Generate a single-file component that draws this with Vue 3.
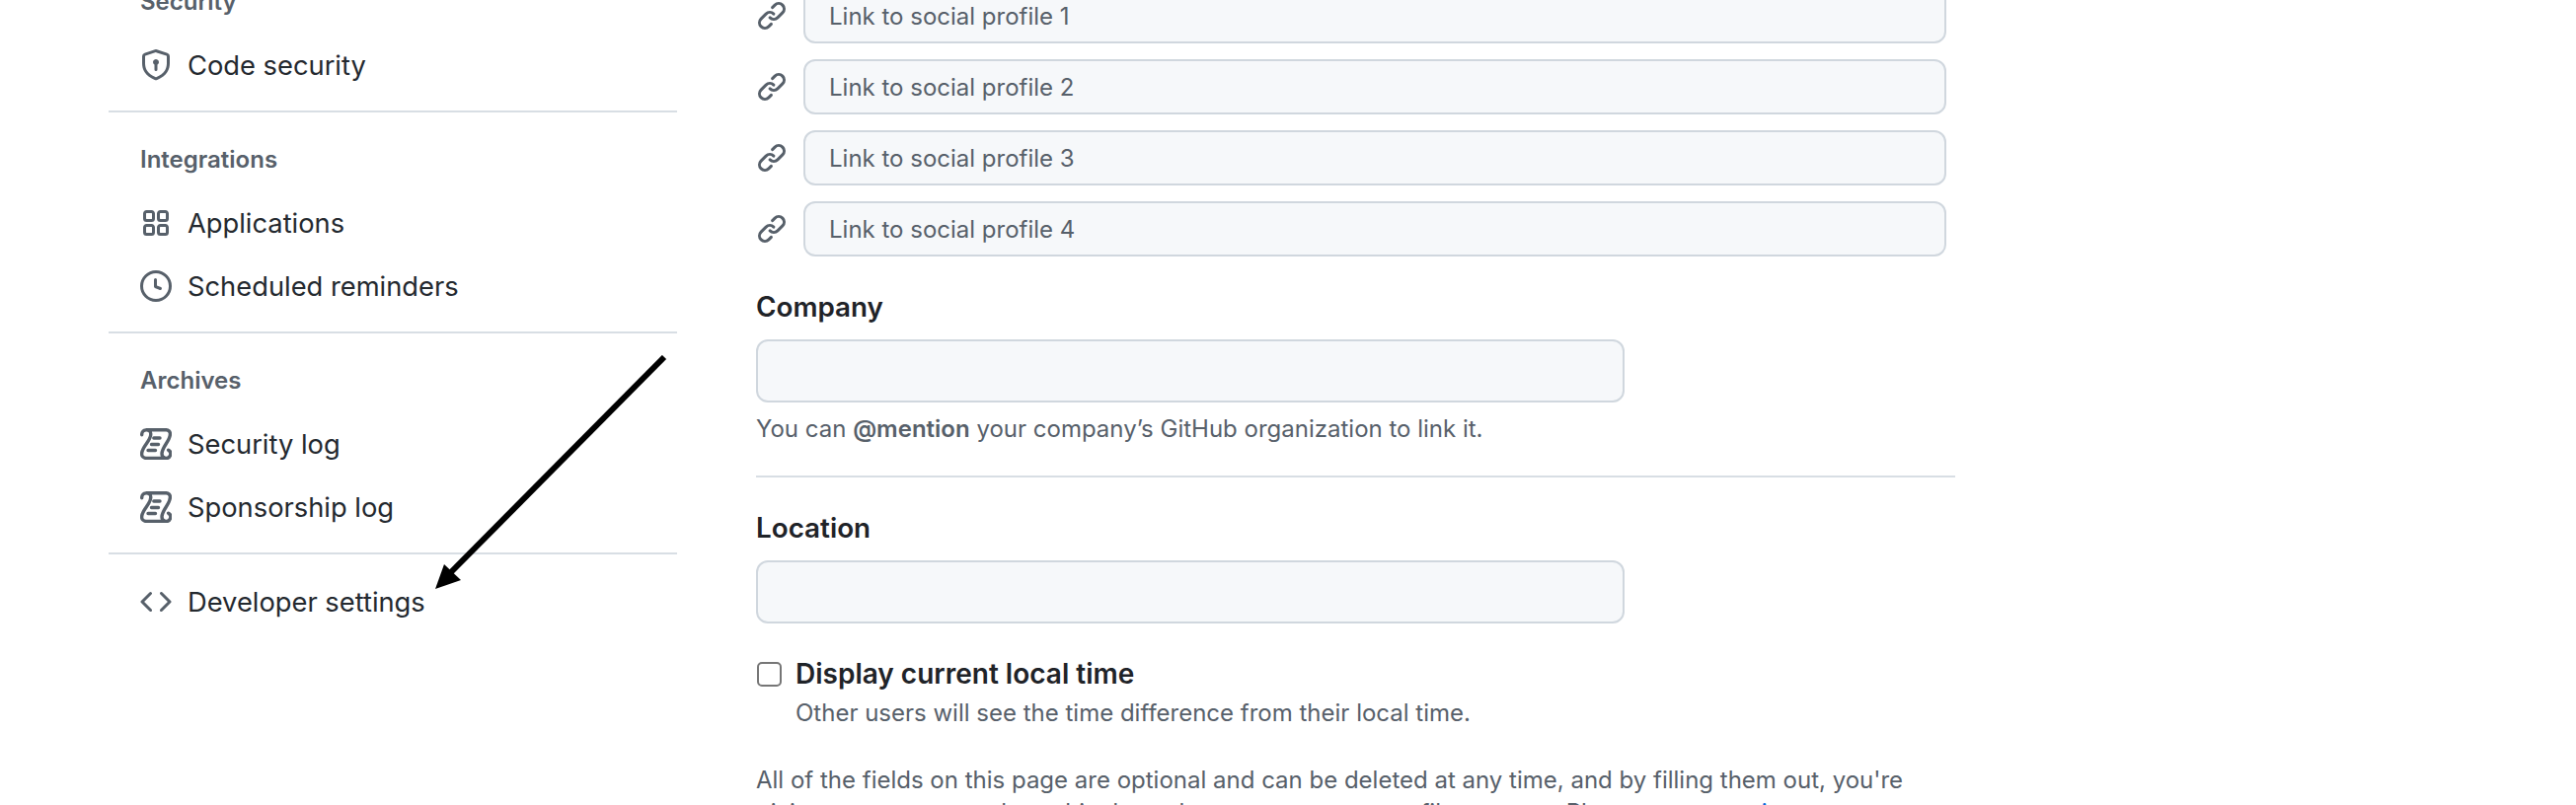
<script setup>
const links = [1, 2, 3, 4]
</script>

<template>
  <div class="page">
    <div class="layout">
      <nav class="side">
        <div class="head">Security</div>
        <a class="item">
          <svg class="ic" viewBox="0 0 16 16"><path d="M7.467.133a1.748 1.748 0 0 1 1.066 0l5.25 1.68A1.75 1.75 0 0 1 15 3.48V7c0 1.566-.32 3.182-1.303 4.682-.983 1.498-2.585 2.813-5.032 3.855a1.697 1.697 0 0 1-1.33 0c-2.447-1.042-4.049-2.357-5.032-3.855C1.32 10.182 1 8.566 1 7V3.48a1.75 1.75 0 0 1 1.217-1.667Zm.61 1.429a.25.25 0 0 0-.153 0l-5.25 1.68a.25.25 0 0 0-.174.238V7c0 1.358.275 2.666 1.057 3.86.784 1.194 2.121 2.34 4.366 3.297a.196.196 0 0 0 .154 0c2.245-.956 3.582-2.104 4.366-3.298C13.225 9.666 13.5 8.36 13.5 7V3.48a.251.251 0 0 0-.174-.237l-5.25-1.68ZM9.5 6.5c0 .536-.286 1.032-.75 1.3v2.45a.75.75 0 0 1-1.5 0V7.8A1.5 1.5 0 1 1 9.5 6.5Z"/></svg>
          Code security
        </a>
        <hr class="rule" />
        <div class="head">Integrations</div>
        <a class="item">
          <svg class="ic" viewBox="0 0 16 16"><path d="M1.5 3.25c0-.966.784-1.75 1.75-1.75h2.5c.966 0 1.75.784 1.75 1.75v2.5A1.75 1.75 0 0 1 5.75 7.5h-2.5A1.75 1.75 0 0 1 1.5 5.75Zm7 0c0-.966.784-1.75 1.75-1.75h2.5c.966 0 1.75.784 1.75 1.75v2.5a1.75 1.75 0 0 1-1.75 1.75h-2.5A1.75 1.75 0 0 1 8.5 5.75Zm-7 7c0-.966.784-1.75 1.75-1.75h2.5c.966 0 1.75.784 1.75 1.75v2.5a1.75 1.75 0 0 1-1.75 1.75h-2.5a1.75 1.75 0 0 1-1.75-1.75Zm7 0c0-.966.784-1.75 1.75-1.75h2.5c.966 0 1.75.784 1.75 1.75v2.5a1.75 1.75 0 0 1-1.75 1.75h-2.5a1.75 1.75 0 0 1-1.75-1.75ZM3.25 3a.25.25 0 0 0-.25.25v2.5c0 .138.112.25.25.25h2.5A.25.25 0 0 0 6 5.75v-2.5A.25.25 0 0 0 5.75 3Zm7 0a.25.25 0 0 0-.25.25v2.5c0 .138.112.25.25.25h2.5a.25.25 0 0 0 .25-.25v-2.5a.25.25 0 0 0-.25-.25Zm-7 7a.25.25 0 0 0-.25.25v2.5c0 .138.112.25.25.25h2.5a.25.25 0 0 0 .25-.25v-2.5a.25.25 0 0 0-.25-.25Zm7 0a.25.25 0 0 0-.25.25v2.5c0 .138.112.25.25.25h2.5a.25.25 0 0 0 .25-.25v-2.5a.25.25 0 0 0-.25-.25Z"/></svg>
          Applications
        </a>
        <a class="item">
          <svg class="ic" viewBox="0 0 16 16"><path d="M8 0a8 8 0 1 1 0 16A8 8 0 0 1 8 0ZM1.5 8a6.5 6.5 0 1 0 13 0 6.5 6.5 0 0 0-13 0Zm7-3.25v2.992l2.028.812a.75.75 0 0 1-.557 1.392l-2.5-1A.751.751 0 0 1 7 8.25v-3.5a.75.75 0 0 1 1.5 0Z"/></svg>
          Scheduled reminders
        </a>
        <hr class="rule" />
        <div class="head">Archives</div>
        <a class="item" v-for="name in ['Security log', 'Sponsorship log']" :key="name">
          <svg class="ic" viewBox="0 0 16 16"><path class="scroll" d="M.85 3.4V3A2.25 2.25 0 0 1 3.1.85H13.2A2 2 0 0 1 15.2 3C15.2 6.5 11 9.5 11 13A2.2 2.2 0 1 0 14.3 11.1M13 15.2H3A2.2 2.2 0 0 1 .8 13C.8 9.5 5.4 6.5 5.4 3A2.2 2.2 0 0 0 3.1.85M6.9 5H10M5.75 8.25H9.25M4 11.25H7.75"/></svg>
          {{ name }}
        </a>
        <hr class="rule" />
        <a class="item">
          <svg class="ic" viewBox="0 0 16 16"><path d="m11.28 3.22 4.25 4.25a.75.75 0 0 1 0 1.06l-4.25 4.25a.749.749 0 0 1-1.275-.326.749.749 0 0 1 .215-.734L13.94 8l-3.72-3.72a.749.749 0 0 1 .326-1.275.749.749 0 0 1 .734.215Zm-6.56 0a.751.751 0 0 1 1.042.018.751.751 0 0 1 .018 1.042L2.06 8l3.72 3.72a.749.749 0 0 1-.326 1.275.749.749 0 0 1-.734-.215L.47 8.53a.75.75 0 0 1 0-1.06Z"/></svg>
          Developer settings
        </a>
      </nav>

      <main class="main">
        <div class="links">
          <div class="link-row" v-for="n in links" :key="n">
            <svg class="ic" viewBox="0 0 16 16"><path d="m7.775 3.275 1.25-1.25a3.5 3.5 0 1 1 4.95 4.95l-2.5 2.5a3.5 3.5 0 0 1-4.95 0 .751.751 0 0 1 .018-1.042.751.751 0 0 1 1.042-.018 1.998 1.998 0 0 0 2.83 0l2.5-2.5a2.002 2.002 0 0 0-2.83-2.83l-1.25 1.25a.751.751 0 0 1-1.042-.018.751.751 0 0 1-.018-1.042Zm-4.69 9.64a1.998 1.998 0 0 0 2.83 0l1.25-1.25a.751.751 0 0 1 1.042.018.751.751 0 0 1 .018 1.042l-1.25 1.25a3.5 3.5 0 1 1-4.95-4.95l2.5-2.5a3.5 3.5 0 0 1 4.95 0 .751.751 0 0 1-.018 1.042.751.751 0 0 1-1.042.018 1.998 1.998 0 0 0-2.83 0l-2.5 2.5a1.998 1.998 0 0 0 0 2.83Z"/></svg>
            <input class="field link-field" type="text" :placeholder="`Link to social profile ${n}`" />
          </div>
        </div>

        <label class="label first">Company</label>
        <input class="field big" type="text" />
        <p class="note">You can <strong>@mention</strong> your company’s GitHub organization to link it.</p>
        <hr class="divider" />

        <label class="label second">Location</label>
        <input class="field big" type="text" />

        <div class="check">
          <input class="box" type="checkbox" />
          <div class="check-body">
            <div class="check-title">Display current local time</div>
            <div class="check-help">Other users will see the time difference from their local time.</div>
          </div>
        </div>

        <p class="legal">All of the fields on this page are optional and can be deleted at any time, and by filling them out, you're giving us consent to share this data wherever your user profile appears. Please see our <a class="blue">privacy statement</a> to learn more about how we use this information.</p>
      </main>
    </div>

    <svg class="arrow" width="260" height="260" viewBox="0 0 260 260">
      <path d="M248 2 L22 230" stroke="#000" stroke-width="6" fill="none" />
      <path d="M16 237 L25 212 L42 228 Z" fill="#000" />
    </svg>
  </div>
</template>

<style>
html, body { margin: 0; background: #fff; }
</style>

<style scoped>
.page {
  position: relative;
  height: 816px;
  overflow: hidden;
  background: #fff;
  font-family: Inter, "Liberation Sans", sans-serif;
  color: #24292f;
}
.layout {
  display: flex;
  align-items: flex-start;
  gap: 80px;
  padding-left: 110px;
}
.side {
  width: 576px;
  flex: none;
  margin-top: -31px;
}
.head {
  height: 64px;
  display: flex;
  align-items: center;
  padding-left: 32px;
  font-size: 24px;
  font-weight: 600;
  color: #57606a;
}
.item {
  box-sizing: border-box;
  height: 64px;
  display: flex;
  align-items: center;
  gap: 16px;
  padding: 2px 0 0 32px;
  font-size: 27.3px;
  color: #24292f;
}
.ic {
  width: 32px;
  height: 32px;
  flex: none;
  fill: #57606a;
}
.scroll {
  fill: none;
  stroke: #57606a;
  stroke-width: 1.7;
  stroke-linecap: round;
  stroke-linejoin: round;
}
.rule {
  height: 2px;
  margin: 15px 0;
  border: 0;
  background: #d8dee4;
}
.main {
  width: 1215px;
  flex: none;
  margin-top: -12px;
}
.links {
  display: flex;
  flex-direction: column;
  gap: 16px;
}
.link-row {
  display: flex;
  align-items: center;
  gap: 16px;
}
.field {
  display: block;
  box-sizing: border-box;
  border: 2px solid #d0d7de;
  border-radius: 12px;
  background: #f6f8fa;
  outline: none;
  font-family: inherit;
}
.link-field {
  width: 1158px;
  height: 56px;
  padding: 0 24px;
  font-size: 24px;
}
.link-field::placeholder {
  color: #57606a;
  opacity: 1;
}
.big {
  width: 880px;
  height: 64px;
}
.label {
  display: block;
  height: 40px;
  line-height: 40px;
  margin-bottom: 13px;
  font-size: 27.8px;
  font-weight: 600;
  color: #1f2328;
}
.first { margin-top: 31px; }
.second { margin-top: 31px; }
.note {
  margin: 9px 0 0;
  font-size: 24px;
  line-height: 36px;
  color: #57606a;
}
.note strong { font-weight: 600; }
.divider {
  height: 2px;
  margin: 29px 0 0;
  border: 0;
  background: #d8dee4;
}
.check {
  display: flex;
  gap: 14px;
  margin-top: 31px;
}
.box {
  appearance: none;
  box-sizing: border-box;
  width: 25px;
  height: 25px;
  margin: 8px 0 0 1px;
  border: 2px solid #767676;
  border-radius: 5px;
  background: #fff;
  flex: none;
}
.check-title {
  height: 40px;
  line-height: 40px;
  font-size: 28px;
  font-weight: 600;
  color: #1f2328;
}
.check-help {
  margin-top: 2px;
  font-size: 24px;
  line-height: 36px;
  color: #57606a;
}
.legal {
  margin: 33px 0 0;
  font-size: 24px;
  line-height: 33px;
  color: #57606a;
}
.blue { color: #0969da; }
.arrow {
  position: absolute;
  left: 425px;
  top: 360px;
}
</style>
